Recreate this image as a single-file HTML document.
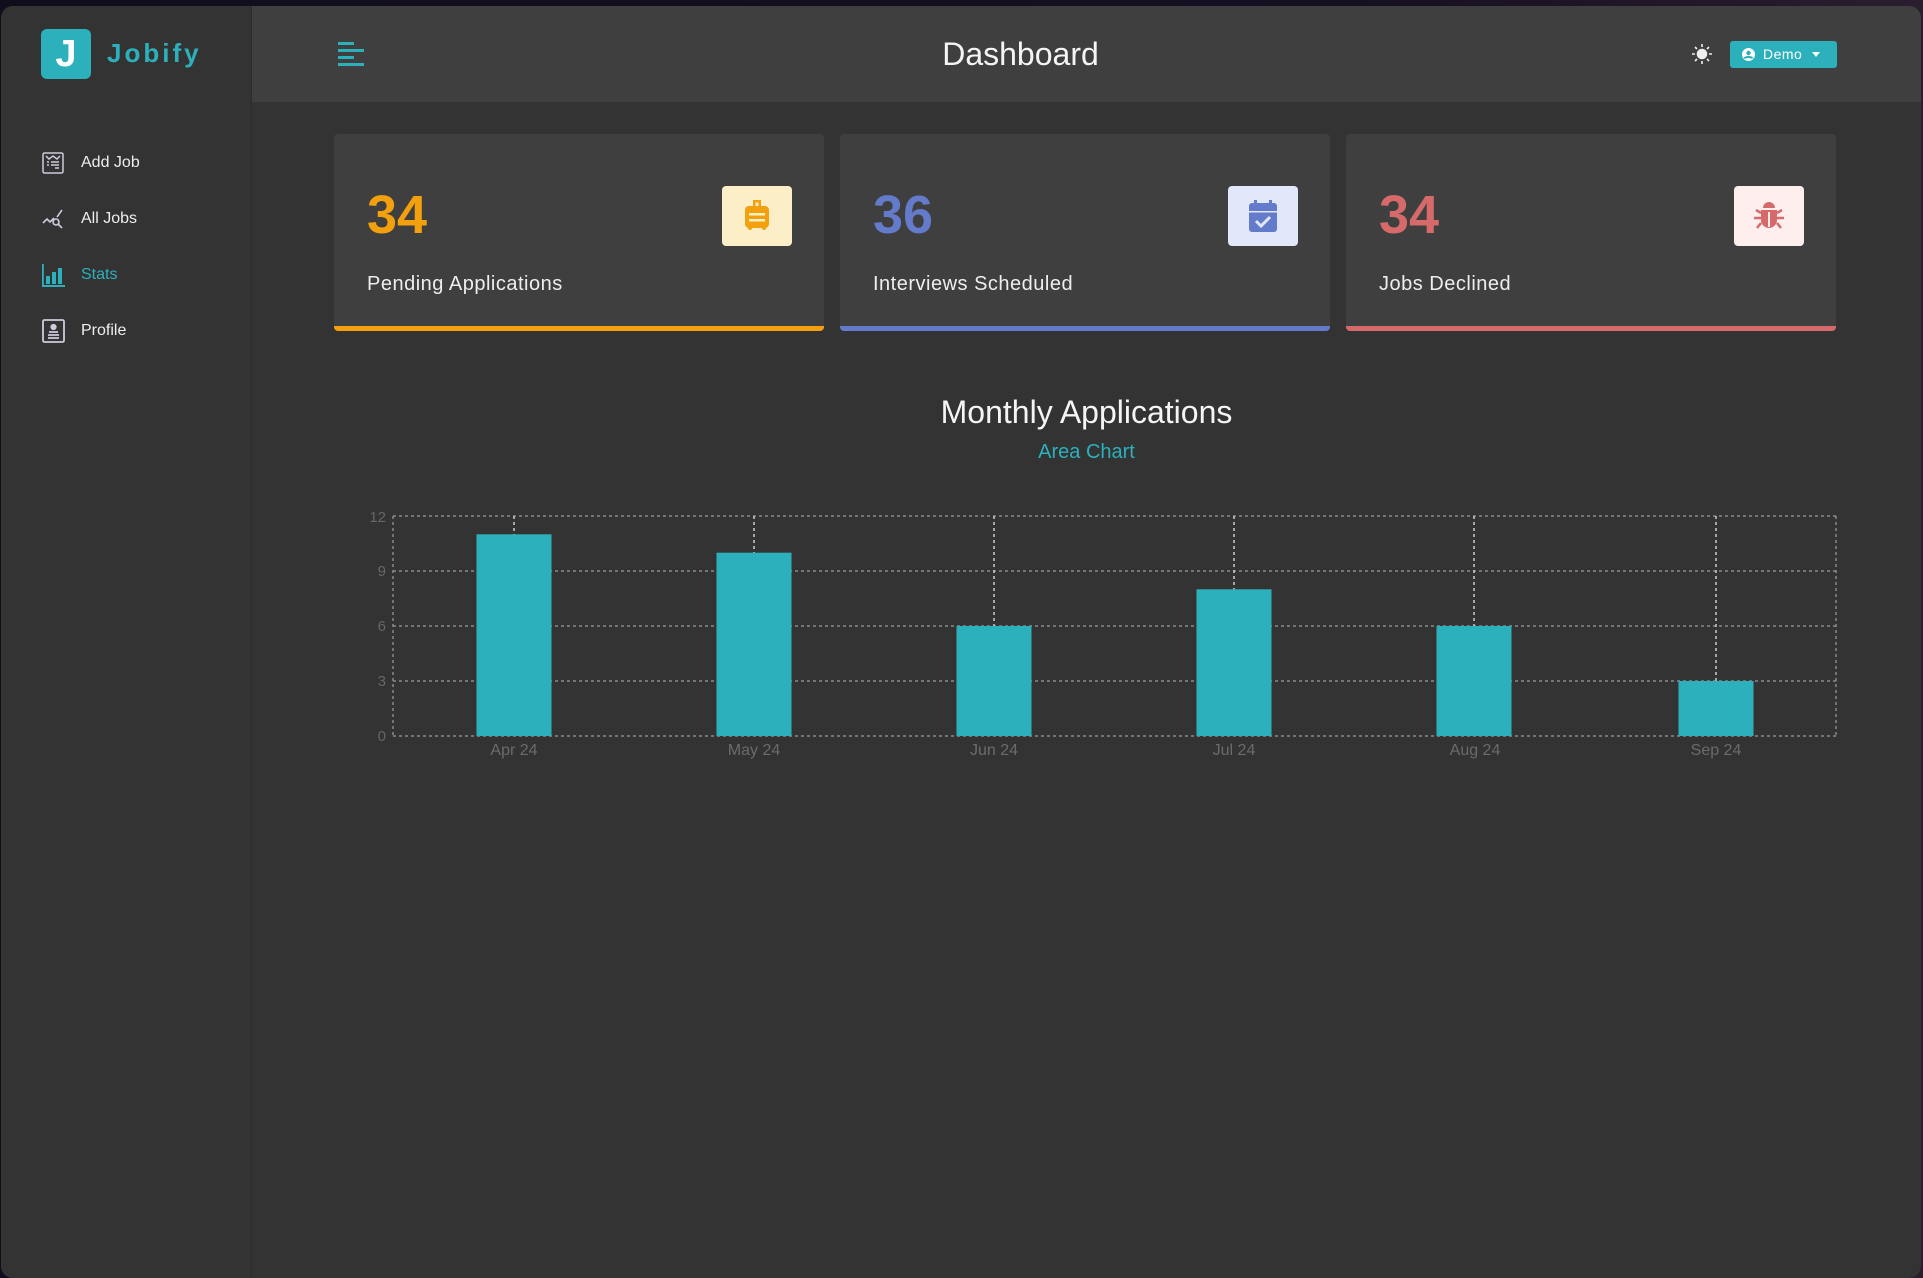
<!DOCTYPE html>
<html><head><meta charset="utf-8"><style>
*{margin:0;padding:0;box-sizing:border-box}
body{width:1923px;height:1278px;overflow:hidden;background:linear-gradient(90deg,#100e1c,#150f22 70%,#2a1d2e);font-family:"Liberation Sans",sans-serif;position:relative}
.app{position:absolute;left:1px;top:6px;width:1920px;height:1272px;background:#333;border-radius:12px 12px 12px 12px;overflow:hidden}
.side{position:absolute;left:0;top:0;width:251px;height:100%;background:#333;border-right:1px solid #2d2d2d}
.head{position:absolute;left:251px;top:0;right:0;height:96px;background:#3f3f3f}
.abs{position:absolute}
.logo{left:40px;top:23px;width:50px;height:50px;background:#2cb1bc;border-radius:6px;color:#fff;font-weight:bold;font-size:38px;text-align:center;line-height:50px}
.brand{left:106px;top:32px;color:#2cb1bc;font-weight:bold;font-size:26px;letter-spacing:3px}
.nav{left:80px;font-size:16px;color:#eee}
.card{position:absolute;top:128px;width:490px;height:197px;background:#3f3f3f;border-radius:4px;border-bottom:5px solid}
.num{position:absolute;left:33px;top:50px;font-size:54px;font-weight:bold}
.lbl{position:absolute;left:33px;top:139px;font-size:20px;color:#eee;letter-spacing:.5px}
.ib{position:absolute;right:32px;top:52px;width:70px;height:60px;border-radius:4px;display:flex;align-items:center;justify-content:center}
</style></head><body>
<div class="app">
<div class="side">
<div class="abs logo">J</div>
<div class="abs brand">Jobify</div>
<svg class="abs" style="left:41px;top:146px" width="22" height="22" viewBox="0 0 22 22" fill="none" stroke="#ccd" stroke-width="1.5"><rect x="1" y="1" width="20" height="20" rx="1.5"/><path d="M4 4l3 3 4-3 4 3 3-3M5 10h2M9 10h8M5 13h2M9 13h8M13 16h4"/></svg>
<div class="abs nav" style="top:148px">Add Job</div>
<svg class="abs" style="left:41px;top:203px" width="24" height="22" viewBox="0 0 24 22" fill="none" stroke="#ccd" stroke-width="1.6"><path d="M1 14l4-4 3 3 4-4M15 8l5-7"/><circle cx="14" cy="13" r="3"/><path d="M16 15l4 4"/></svg>
<div class="abs nav" style="top:204px">All Jobs</div>
<svg class="abs" style="left:41px;top:258px" width="23" height="23" viewBox="0 0 23 23" fill="#2cb1bc"><rect x="0" y="0" width="1.8" height="23"/><rect x="0" y="21" width="23" height="2"/><rect x="4" y="12" width="4" height="8"/><rect x="10" y="8" width="4" height="12"/><rect x="16" y="4" width="4" height="16"/></svg>
<div class="abs nav" style="top:260px;color:#2cb1bc">Stats</div>
<svg class="abs" style="left:41px;top:313px" width="23" height="24" viewBox="0 0 23 24" fill="none" stroke="#ccd" stroke-width="1.8"><rect x="1" y="1" width="21" height="22" rx="1.5"/><circle cx="11.5" cy="8" r="2.2" fill="#ccd"/><path d="M7 13h9M6 16h11M6 19h11"/></svg>
<div class="abs nav" style="top:316px">Profile</div>
</div>
<div class="head">
<svg class="abs" style="left:86px;top:36px" width="26" height="24" viewBox="0 0 26 24" fill="#2cb1bc"><rect x="0" y="0" width="16" height="3"/><rect x="0" y="7" width="26" height="3"/><rect x="0" y="14" width="16" height="3"/><rect x="0" y="21" width="26" height="3"/></svg>
<div class="abs" style="left:0;right:0;margin-left:-132px;top:30px;text-align:center;color:#f5f5f5;font-size:32px">Dashboard</div>
<svg class="abs" style="left:1440px;top:38px" width="20" height="20" viewBox="0 0 20 20" stroke="#eee" stroke-width="1.6"><circle cx="10" cy="10" r="4.5" fill="#eee"/><path d="M10 0v3M10 17v3M0 10h3M17 10h3M3 3l2 2M15 15l2 2M3 17l2-2M15 5l2-2"/></svg>
<div class="abs" style="left:1478px;top:35px;width:107px;height:27px;background:#2cb1bc;border-radius:3px;color:#fff;font-size:14px;line-height:27px">
<svg style="position:absolute;left:12px;top:7px" width="13" height="13" viewBox="0 0 13 13"><circle cx="6.5" cy="6.5" r="6.5" fill="#fff"/><circle cx="6.5" cy="5" r="2.2" fill="#2cb1bc"/><path d="M2.5 10.5c1-2 7-2 8 0" stroke="#2cb1bc" stroke-width="2" fill="none"/></svg>
<span style="position:absolute;left:33px;letter-spacing:.5px">Demo</span>
<span style="position:absolute;left:82px;top:11px;border:4px solid transparent;border-top:5px solid #fff;border-bottom:0;width:0;height:0"></span>
</div>
</div>

<div class="card" style="left:333px;border-color:#f3a00f">
<div class="num" style="color:#f3a00f">34</div><div class="lbl">Pending Applications</div>
<div class="ib" style="background:#fcefc7"><svg width="24" height="32" viewBox="0 0 24 32" fill="#f3a00f"><path d="M8 0h8v7h-2.5V2.5h-3V7H8z"/><rect x="0" y="6" width="24" height="22" rx="4"/><rect x="3" y="26" width="4" height="4" rx="2"/><rect x="17" y="26" width="4" height="4" rx="2"/><rect x="4" y="13" width="16" height="2.5" fill="#fcefc7"/><rect x="4" y="19" width="16" height="2.5" fill="#fcefc7"/></svg></div>
</div>
<div class="card" style="left:839px;border-color:#647acb">
<div class="num" style="color:#647acb">36</div><div class="lbl">Interviews Scheduled</div>
<div class="ib" style="background:#e0e8f9"><svg width="28" height="32" viewBox="0 0 28 32" fill="#647acb"><rect x="5" y="0" width="3" height="5"/><rect x="20" y="0" width="3" height="5"/><path d="M0 6a3 3 0 0 1 3-3h22a3 3 0 0 1 3 3v5H0z"/><path d="M0 12.5h28V29a3 3 0 0 1-3 3H3a3 3 0 0 1-3-3z"/><path d="M7 21l5 5 9-9" stroke="#e0e8f9" stroke-width="3" fill="none"/></svg></div>
</div>
<div class="card" style="left:1345px;border-color:#d66a6a">
<div class="num" style="color:#d66a6a">34</div><div class="lbl">Jobs Declined</div>
<div class="ib" style="background:#ffeeee"><svg width="32" height="32" viewBox="0 0 32 32" fill="#d66a6a" stroke="#d66a6a"><path d="M10 8a6 6 0 0 1 12 0z" stroke="none"/><path d="M8 10h16v10a8 8 0 0 1-16 0z" stroke="none"/><path d="M15 12h2v15h-2z" fill="#ffeeee" stroke="none"/><path d="M8 13L3 10M24 13l5-3M8 18H1M24 18h7M8 23l-4 5M24 23l4 5" stroke-width="2.5" fill="none"/></svg></div>
</div>

<div class="abs" style="left:251px;right:0;top:388px;text-align:center;color:#f5f5f5;font-size:32px">Monthly Applications</div>
<div class="abs" style="left:251px;right:0;top:435px;text-align:center;color:#2cb1bc;font-size:20px">Area Chart</div>
</div>

<svg class="abs" style="left:0;top:0" width="1923" height="1278" font-family="Liberation Sans, sans-serif">
<g stroke="#8a8a8a" stroke-width="1.5" stroke-dasharray="3 3" fill="none">
<path d="M393 516H1836M393 571H1836M393 626H1836M393 681H1836M393 736H1836M393 516V736M1836 516V736"/>
<path d="M514 516V736M754 516V736M994 516V736M1234 516V736M1474 516V736M1716 516V736" stroke="#ccc"/>
</g>
<g fill="#2cb1bc">
<rect x="476.5" y="534.3" width="75" height="201.7"/>
<rect x="716.5" y="552.7" width="75" height="183.3"/>
<rect x="956.5" y="626" width="75" height="110"/>
<rect x="1196.5" y="589.3" width="75" height="146.7"/>
<rect x="1436.5" y="626" width="75" height="110"/>
<rect x="1678.5" y="681" width="75" height="55"/>
</g>
<g fill="#666" font-size="15" text-anchor="end">
<text x="386" y="522">12</text><text x="386" y="576">9</text><text x="386" y="631">6</text><text x="386" y="686">3</text><text x="386" y="741">0</text>
</g>
<g fill="#6b6b6b" font-size="16" text-anchor="middle">
<text x="514" y="755">Apr 24</text><text x="754" y="755">May 24</text><text x="994" y="755">Jun 24</text><text x="1234" y="755">Jul 24</text><text x="1475" y="755">Aug 24</text><text x="1716" y="755">Sep 24</text>
</g>
</svg>
</body></html>
